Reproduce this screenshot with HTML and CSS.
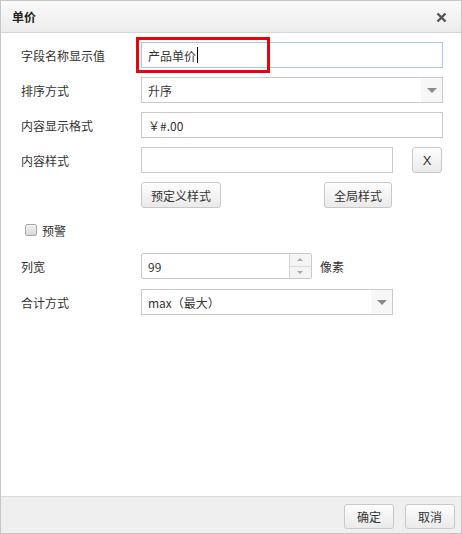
FILE: index.html
```html
<!DOCTYPE html>
<html lang="zh-CN">
<head>
    <meta charset="UTF-8">
    <title>单价</title>
    <link rel="stylesheet" href="styles.css">
</head>
<body>
    <div class="dialog">
        <div class="dialog-header">
            <span class="dialog-title">单价</span>
            <svg class="close-icon" width="11" height="11" viewBox="0 0 11 11">
                <path d="M1.5 1.5 L9.5 9.5 M9.5 1.5 L1.5 9.5" stroke="#555" stroke-width="2.4" fill="none"/>
            </svg>
        </div>

        <div class="dialog-body">
            <div class="form-row">
                <label class="form-label">字段名称显示值</label>
                <div class="field field-focus field-wide">产品单价<span class="caret"></span></div>
                <div class="highlight"></div>
            </div>
            <div class="form-row">
                <label class="form-label">排序方式</label>
                <div class="field field-wide select">
                    <span>升序</span>
                    <span class="select-arrow"></span>
                </div>
            </div>
            <div class="form-row">
                <label class="form-label">内容显示格式</label>
                <div class="field field-wide">￥#.00</div>
            </div>
            <div class="form-row">
                <label class="form-label">内容样式</label>
                <div class="field field-mid"></div>
                <button class="btn btn-x">X</button>
            </div>
            <div class="form-row btn-row">
                <button class="btn btn-style">预定义样式</button>
                <button class="btn btn-style">全局样式</button>
            </div>
            <div class="check-row">
                <span class="checkbox"></span>
                <span>预警</span>
            </div>
            <div class="form-row row-width">
                <label class="form-label">列宽</label>
                <div class="field field-num">
                    <span>99</span>
                    <span class="spinner">
                        <span class="spin-up"></span>
                        <span class="spin-down"></span>
                    </span>
                </div>
                <span class="unit">像素</span>
            </div>
            <div class="form-row">
                <label class="form-label">合计方式</label>
                <div class="field field-mid select">
                    <span>max（最大）</span>
                    <span class="select-arrow"></span>
                </div>
            </div>
        </div>

        <div class="dialog-footer">
            <button class="btn btn-foot">确定</button>
            <button class="btn btn-foot">取消</button>
        </div>
    </div>
</body>
</html>
```

FILE: styles.css
```css
html, body {
    margin: 0;
    height: 100%;
}

body {
    font-family: "Noto Sans CJK SC", "Liberation Sans", sans-serif;
    font-size: 12px;
    color: #333;
    background-color: #fff;
}

.dialog {
    box-sizing: border-box;
    width: 462px;
    height: 534px;
    border: 1px solid #c6c6c6;
    display: flex;
    flex-direction: column;
}

.dialog-header {
    height: 31px;
    border-bottom: 1px solid #d6d6d6;
    background: linear-gradient(#fafafa, #ececec);
    display: flex;
    align-items: center;
    justify-content: space-between;
    padding: 0 14px 0 11px;
    flex-shrink: 0;
}

.dialog-title {
    font-weight: bold;
    color: #222;
}

.close-icon {
    margin-top: 2px;
}

.dialog-body {
    flex: 1;
    padding: 9px 0 0 20px;
}

.form-row {
    position: relative;
    display: flex;
    align-items: center;
    height: 26px;
    margin-bottom: 9px;
}

.form-label {
    width: 120px;
    flex-shrink: 0;
}

.field {
    box-sizing: border-box;
    height: 26px;
    border: 1px solid #c9c9c9;
    background: #fff;
    display: flex;
    align-items: center;
    padding-left: 6px;
    color: #333;
}

.field-wide {
    width: 302px;
}

.field-mid {
    width: 252px;
}

.field-focus {
    border-color: #a9c6ec;
}

.caret {
    display: inline-block;
    width: 1px;
    height: 16px;
    background: #000;
    margin-left: 1px;
}

.highlight {
    position: absolute;
    left: 115px;
    top: -5px;
    width: 128px;
    height: 30px;
    border: 3px solid #e8040a;
}

.select {
    justify-content: space-between;
    padding-right: 0;
}

.select-arrow {
    width: 21px;
    height: 24px;
    background: #f7f7f7;
    position: relative;
}

.select-arrow::after {
    content: "";
    position: absolute;
    left: 6px;
    top: 10px;
    border-left: 5px solid transparent;
    border-right: 5px solid transparent;
    border-top: 5px solid #8a8a8a;
}

.btn {
    font-family: inherit;
    font-size: 12px;
    color: #333;
    border: 1px solid #c8c8c8;
    border-radius: 3px;
    background: linear-gradient(#fdfdfd, #eaeaea);
    height: 26px;
    padding: 0;
}

.btn-x {
    width: 30px;
    margin-left: 19px;
    font-family: "Liberation Sans", sans-serif;
    font-size: 13px;
}

.btn-row {
    padding-left: 120px;
    justify-content: space-between;
    width: 251px;
    margin-top: 1px;
    margin-bottom: 8px;
}

.btn-style {
    height: 26px;
    padding: 0 9px;
}

.check-row {
    display: flex;
    align-items: center;
    gap: 5px;
    padding-left: 4px;
    margin-top: 12px;
    height: 20px;
}

.checkbox {
    box-sizing: border-box;
    width: 12px;
    height: 12px;
    border: 1px solid #a9a9a9;
    border-radius: 2px;
    background: linear-gradient(#f2f2f2, #d8d8d8);
}

.row-width {
    margin-top: 13px;
    margin-bottom: 10px;
}

.field-num {
    width: 171px;
    justify-content: space-between;
    padding-right: 0;
    border-radius: 2px;
}

.spinner {
    width: 21px;
    height: 24px;
    border-left: 1px solid #d6d6d6;
    display: flex;
    flex-direction: column;
    background: #f4f4f4;
}

.spin-up, .spin-down {
    flex: 1;
    position: relative;
}

.spin-up {
    border-bottom: 1px solid #dcdcdc;
}

.spin-up::after, .spin-down::after {
    content: "";
    position: absolute;
    left: 7px;
    top: 4px;
    border-left: 3px solid transparent;
    border-right: 3px solid transparent;
}

.spin-up::after {
    border-bottom: 3px solid #aaa;
}

.spin-down::after {
    border-top: 3px solid #aaa;
}

.unit {
    margin-left: 8px;
}

.dialog-footer {
    height: 36px;
    border-top: 1px solid #dadada;
    background: #efefef;
    display: flex;
    align-items: center;
    justify-content: flex-end;
    gap: 11px;
    padding-right: 6px;
    flex-shrink: 0;
}

.btn-foot {
    width: 50px;
    height: 25px;
    margin-top: 2px;
}
```
